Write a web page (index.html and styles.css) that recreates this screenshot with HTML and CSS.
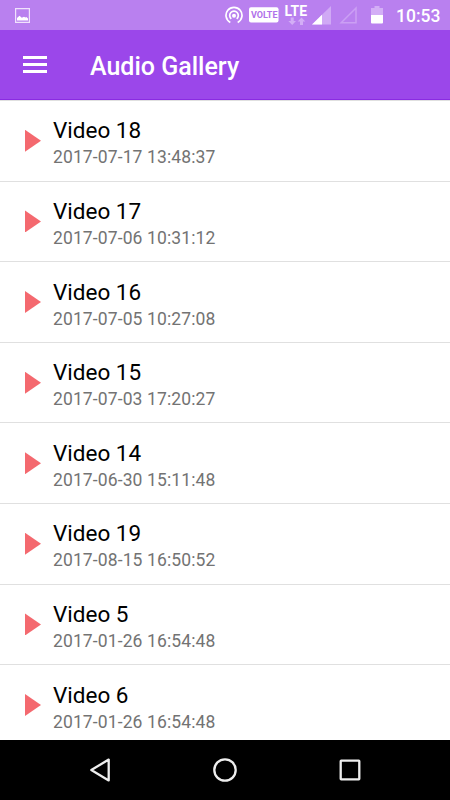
FILE: index.html
```
<!doctype html>
<html lang="en">
<head>

<meta charset="utf-8">
<meta name="viewport" content="width=device-width, initial-scale=1">

<title>Audio Gallery</title>

<link rel="stylesheet" href="styles.css">

</head>
<body>

<div class="status-bar">
	<svg class="status-picture" width="15" height="15" viewBox="0 0 15 15">
		<path d="M.6.6h13.8v13.8H.6z" fill="none" stroke="#f0e2fc" stroke-width="1.2"/>
		<path d="M2 12.6V10l2.5-2.3 2.3 2 2.2-1 1.3.9 1-.5 1.7 1.5v2z" fill="#fff"/>
	</svg>

	<!-- hotspot, volte, lte, signal, empty signal, battery -->
	<svg class="status-icons" width="165" height="30" viewBox="0 0 165 30">
		<g fill="none" stroke="#fff" stroke-width="1.7">
			<path d="M5.3 22.4a8 8 0 1 1 7.4 0"/>
			<path d="M6.3 18.8a4.3 4.3 0 1 1 5.4 0"/>
		</g>
		<circle cx="9" cy="15.8" r="2" fill="#fff"/>
		<rect x="24" y="7.3" width="29.5" height="15.3" rx="2" fill="#fff"/>
		<text class="volte" x="26" y="18.2" textLength="26.5" lengthAdjust="spacingAndGlyphs">VOLTE</text>
		<text class="lte" x="59.5" y="16" textLength="22.5" lengthAdjust="spacingAndGlyphs">LTE</text>
		<path d="M65.7 17.5h3V21H71l-3.8 4-3.8-4h2.3zM75 25h3v-3.5h2.3l-3.8-4-3.8 4H75z" fill="#d3aef6"/>
		<path d="M106 6v18.5H87z" fill="#d0a9f5"/>
		<path d="M97 14.8v9.7H87z" fill="#fff"/>
		<path d="M131 8v14.7h-14.8z" fill="none" stroke="#cb9ff4" stroke-width="1.5"/>
		<path d="M149.5 6h5v2h3.5v8h-12V8h3.5z" fill="#d3aef6"/>
		<path d="M146 15h12v7.5a1 1 0 0 1-1 1h-10a1 1 0 0 1-1-1z" fill="#fff"/>
	</svg>

	<span class="clock">10:53</span>
</div>

<div class="toolbar">
	<div class="menu">
		<span></span>
		<span></span>
		<span></span>
	</div>
	<h1>Audio Gallery</h1>
</div>

<ul class="list">
	<li>
		<span class="play"></span>
		<div>
			<h2>Video 18</h2>
			<p>2017-07-17 13:48:37</p>
		</div>
	</li>
	<li>
		<span class="play"></span>
		<div>
			<h2>Video 17</h2>
			<p>2017-07-06 10:31:12</p>
		</div>
	</li>
	<li>
		<span class="play"></span>
		<div>
			<h2>Video 16</h2>
			<p>2017-07-05 10:27:08</p>
		</div>
	</li>
	<li>
		<span class="play"></span>
		<div>
			<h2>Video 15</h2>
			<p>2017-07-03 17:20:27</p>
		</div>
	</li>
	<li>
		<span class="play"></span>
		<div>
			<h2>Video 14</h2>
			<p>2017-06-30 15:11:48</p>
		</div>
	</li>
	<li>
		<span class="play"></span>
		<div>
			<h2>Video 19</h2>
			<p>2017-08-15 16:50:52</p>
		</div>
	</li>
	<li>
		<span class="play"></span>
		<div>
			<h2>Video 5</h2>
			<p>2017-01-26 16:54:48</p>
		</div>
	</li>
	<li>
		<span class="play"></span>
		<div>
			<h2>Video 6</h2>
			<p>2017-01-26 16:54:48</p>
		</div>
	</li>
</ul>

<div class="nav-bar">
	<svg width="24" height="26" viewBox="0 0 24 26">
		<path d="M20.7 2.6v20.8L3.3 13z" stroke-linejoin="round"/>
	</svg>
	<svg width="26" height="26" viewBox="0 0 26 26">
		<circle cx="13" cy="13" r="10.7"/>
	</svg>
	<svg width="24" height="26" viewBox="0 0 24 26">
		<rect x="2.7" y="3.7" width="18.6" height="18.6" rx=".5"/>
	</svg>
</div>

</body>
</html>
```

FILE: styles.css
```
* {
	box-sizing: border-box;
}

body {
	display: flex;
	flex-direction: column;
	height: 800px;
	margin: 0;
	overflow: hidden;
	background: #fff;
	font-family: Roboto, "Liberation Sans", sans-serif;
}

h1,
h2,
p {
	margin: 0;
}

.status-bar {
	display: flex;
	flex: none;
	align-items: center;
	height: 30px;
	padding: 0 10px 0 15px;
	background: #b980ef;
}

.status-icons {
	margin-left: auto;
}

.volte {
	fill: #b071ea;
	font-size: 9px;
	font-weight: 700;
}

.lte {
	fill: #fff;
	font-size: 14.5px;
	font-weight: 700;
}

.clock {
	width: 44px;
	margin-left: 6px;
	padding-top: 2px;
	color: #fff;
	font-size: 17.5px;
	font-weight: 500;
	line-height: 28px;
	white-space: nowrap;
}

.toolbar {
	display: flex;
	flex: none;
	align-items: center;
	height: 70px;
	padding: 4px 23px 0;
	border-bottom: 1px solid #8a2be2;
	background: #9b47ea;
}

.menu {
	display: flex;
	flex-direction: column;
	gap: 4px;
	width: 24px;
	margin-right: 43px;
	padding-bottom: 4px;
}

.menu span {
	height: 3px;
	background: #fff;
}

h1 {
	color: #fff;
	font-size: 25px;
	font-weight: 500;
	line-height: 30px;
}

.list {
	flex: 1;
	min-height: 0;
	margin: 0;
	padding: 0;
	overflow: hidden;
	list-style: none;
}

.list li {
	display: flex;
	height: 80.6px;
	padding: 15.35px 25px 0;
	border-top: 1px solid #e0e0e0;
}

.play {
	width: 16px;
	height: 22px;
	margin: 13.5px 12px 0 0;
	background: #f4696f;
	clip-path: polygon(0 0, 100% 50%, 0 100%);
}

h2 {
	color: #000;
	font-size: 22.5px;
	font-weight: 400;
	line-height: 28px;
}

p {
	color: #737373;
	font-size: 17.5px;
	letter-spacing: .12px;
	line-height: 27px;
}

.nav-bar {
	display: flex;
	flex: none;
	align-items: center;
	justify-content: space-between;
	height: 60px;
	padding: 0 88px;
	background: #000;
}

.nav-bar svg {
	fill: none;
	stroke: #eee;
	stroke-width: 2.3;
}
```
